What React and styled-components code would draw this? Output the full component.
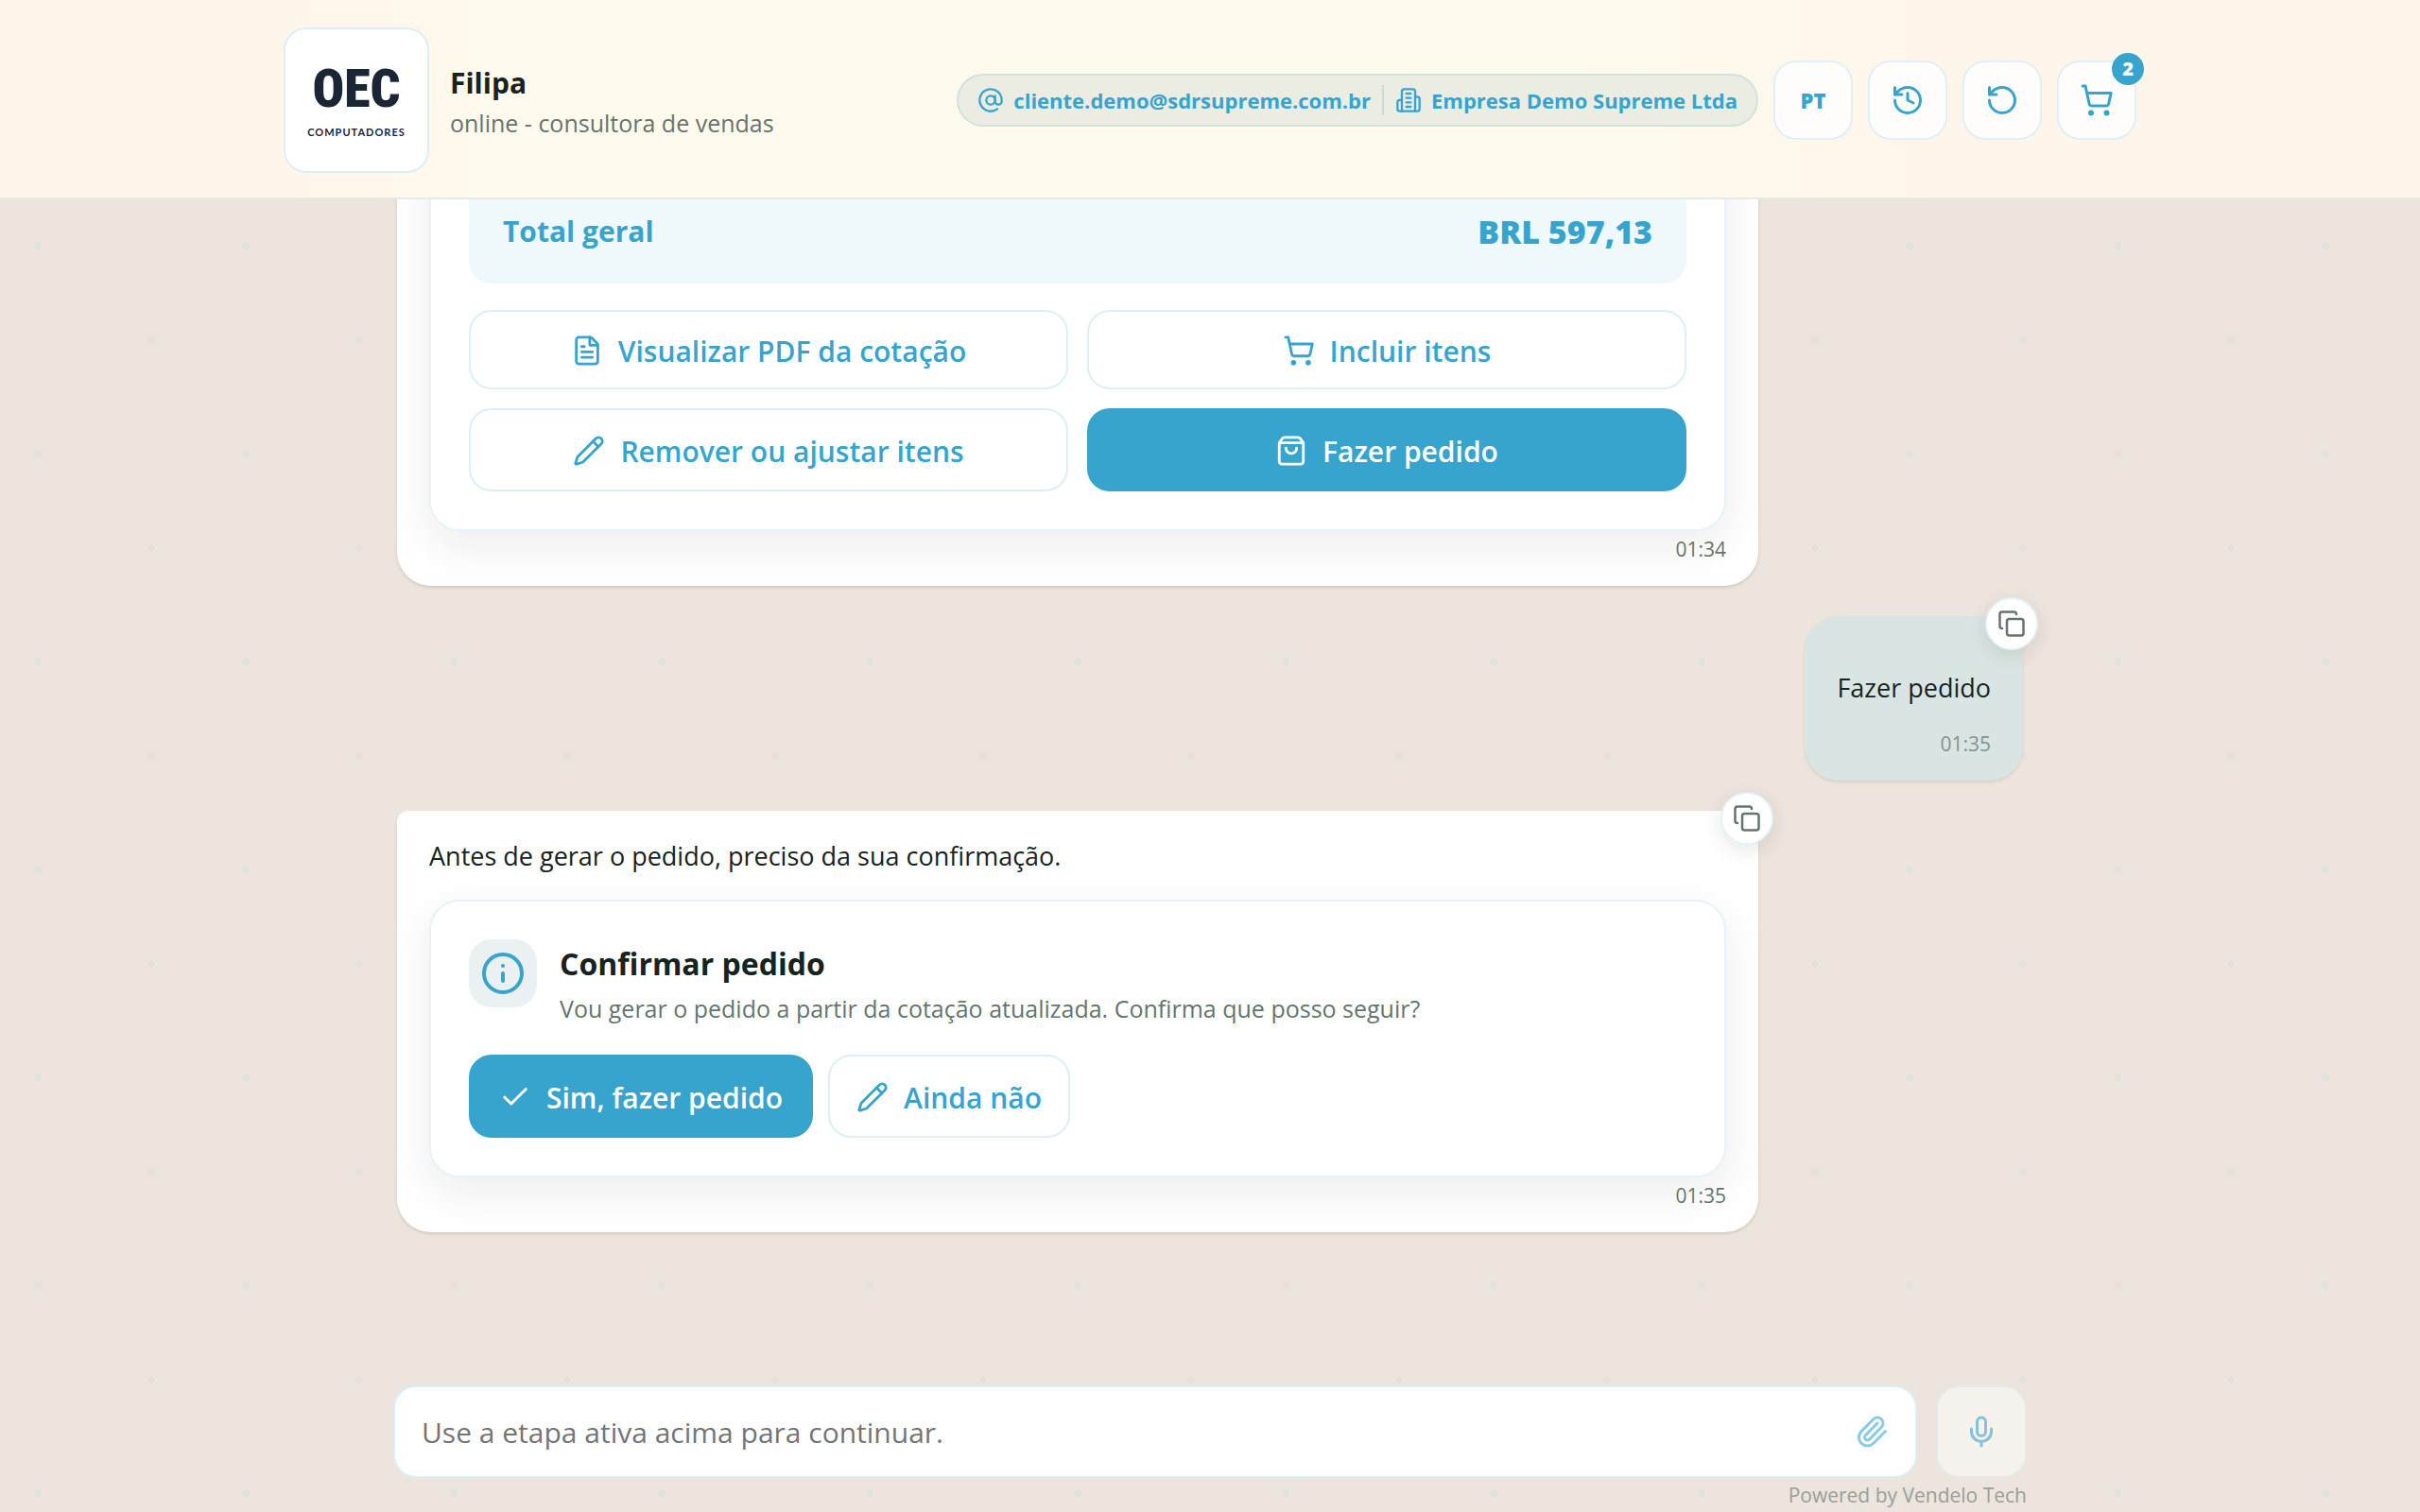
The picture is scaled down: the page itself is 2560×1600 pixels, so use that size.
import React from 'react';
import styled, { createGlobalStyle, css } from 'styled-components';
import {
  AtSign,
  Check,
  Copy,
  FileText,
  History,
  Info,
  Mic,
  Paperclip,
  Pencil,
  RotateCcw,
  ShoppingBag,
  ShoppingCart,
} from 'lucide-react';

const accent = '#37a4ce';
const line = '#dceff7';
const ink = '#17231d';
const muted = '#66756c';

export default class App extends React.Component {
  constructor(props) {
    super(props);
    this.state = { draft: '' };
  }

  handleInputChange(value) {
    this.setState({ draft: value });
  }

  render() {
    return (
      <Page>
        <GlobalStyle />
        <Header>
          <HeaderInner>
            <Logo>
              <LogoName>OEC</LogoName>
              <LogoTag>COMPUTADORES</LogoTag>
            </Logo>
            <Agent>
              <AgentName>Filipa</AgentName>
              <AgentStatus>online - consultora de vendas</AgentStatus>
            </Agent>
            <Customer>
              <AtSign size={28} />
              <span>cliente.demo@sdrsupreme.com.br</span>
              <Divider />
              <BuildingIcon />
              <span>Empresa Demo Supreme Ltda</span>
            </Customer>
            <HeaderButton type="button">PT</HeaderButton>
            <HeaderButton type="button" aria-label="Histórico">
              <History size={36} />
            </HeaderButton>
            <HeaderButton type="button" aria-label="Reiniciar">
              <RotateCcw size={36} />
            </HeaderButton>
            <HeaderButton type="button" aria-label="Carrinho">
              <ShoppingCart size={36} />
              <Badge>2</Badge>
            </HeaderButton>
          </HeaderInner>
        </Header>

        <Chat>
          <Messages>
            <Bubble>
              <Card>
                <Total>
                  <TotalLabel>Total geral</TotalLabel>
                  <TotalValue>BRL 597,13</TotalValue>
                </Total>
                <ActionGrid>
                  <Action type="button">
                    <FileText size={34} />
                    Visualizar PDF da cotação
                  </Action>
                  <Action type="button">
                    <ShoppingCart size={34} />
                    Incluir itens
                  </Action>
                  <Action type="button" $tall>
                    <Pencil size={34} />
                    Remover ou ajustar itens
                  </Action>
                  <Action type="button" $tall $primary>
                    <ShoppingBag size={34} />
                    Fazer pedido
                  </Action>
                </ActionGrid>
              </Card>
              <Time>01:34</Time>
            </Bubble>

            <UserBubble>
              <CopyButton type="button" aria-label="Copiar">
                <Copy size={30} />
              </CopyButton>
              <Text>Fazer pedido</Text>
              <UserTime>01:35</UserTime>
            </UserBubble>

            <Bubble>
              <CopyButton type="button" aria-label="Copiar">
                <Copy size={30} />
              </CopyButton>
              <Text>Antes de gerar o pedido, preciso da sua confirmação.</Text>
              <ConfirmCard>
                <Notice>
                  <NoticeIcon>
                    <Info size={48} />
                  </NoticeIcon>
                  <div>
                    <NoticeTitle>Confirmar pedido</NoticeTitle>
                    <NoticeText>
                      Vou gerar o pedido a partir da cotação atualizada. Confirma que posso seguir?
                    </NoticeText>
                  </div>
                </Notice>
                <ActionRow>
                  <Action type="button" $tall $primary>
                    <Check size={34} />
                    Sim, fazer pedido
                  </Action>
                  <Action type="button" $tall>
                    <Pencil size={34} />
                    Ainda não
                  </Action>
                </ActionRow>
              </ConfirmCard>
              <Time>01:35</Time>
            </Bubble>
          </Messages>
        </Chat>

        <Footer>
          <Composer>
            <Field>
              <FieldInput
                type="text"
                aria-label="Mensagem"
                placeholder="Use a etapa ativa acima para continuar."
                value={this.state.draft}
                onChange={(e) => {
                  this.handleInputChange(e.target.value);
                }}
              />
              <AttachButton type="button" aria-label="Anexar arquivo">
                <Paperclip size={36} />
              </AttachButton>
            </Field>
            <MicButton type="button" aria-label="Gravar áudio">
              <Mic size={36} />
            </MicButton>
          </Composer>
          <Powered>Powered by Vendelo Tech</Powered>
        </Footer>
      </Page>
    );
  }
}

const BuildingIcon = () => (
  <svg
    width="28"
    height="28"
    viewBox="0 0 24 24"
    fill="none"
    stroke="currentColor"
    strokeWidth="2"
    strokeLinecap="round"
    strokeLinejoin="round"
    aria-hidden="true"
  >
    <path d="M6 22V4a2 2 0 0 1 2-2h8a2 2 0 0 1 2 2v18Z" />
    <path d="M6 12H4a2 2 0 0 0-2 2v6a2 2 0 0 0 2 2h2" />
    <path d="M18 9h2a2 2 0 0 1 2 2v9a2 2 0 0 1-2 2h-2" />
    <path d="M10 6h4M10 10h4M10 14h4M10 18h4" />
  </svg>
);

const GlobalStyle = createGlobalStyle`
  * {
    box-sizing: border-box;
  }

  body {
    margin: 0;
    color: ${ink};
    font-family: "Segoe UI", "Open Sans", "Noto Sans", sans-serif;
  }

  button,
  input {
    font: inherit;
    color: inherit;
  }

  button {
    cursor: pointer;
  }

  svg {
    flex: none;
  }
`;

const Page = styled.div`
  display: flex;
  flex-direction: column;
  height: 100vh;
  overflow: hidden;
  background-color: #ece4dd;
  background-image:
    radial-gradient(circle at 40px 40px, #e0e2dc 4px, transparent 4px),
    radial-gradient(circle at 160px 140px, #e4e2db 4px, transparent 4px);
  background-size: 220px 220px;
`;

const Header = styled.header`
  flex: none;
  padding: 28px 40px 25px;
  border-bottom: 2px solid #e4ece8;
  background: linear-gradient(90deg, #fff6eb 12%, #fff9ee 22%, #fff9ee 66%, #fff6eb 80%);
`;

const HeaderInner = styled.div`
  display: flex;
  align-items: center;
  gap: 16px;
  max-width: 1960px;
  min-height: 156px;
  margin: 0 auto;
`;

const Logo = styled.div`
  display: flex;
  flex: none;
  flex-direction: column;
  align-items: center;
  justify-content: center;
  width: 154px;
  height: 154px;
  padding-top: 4px;
  border: 2px solid ${line};
  border-radius: 24px;
  background: #fff;
  color: #1a2536;
`;

const LogoName = styled.span`
  font-family: "Roboto Condensed", "Liberation Sans Narrow", "Liberation Sans", sans-serif;
  font-size: 56px;
  font-weight: 900;
  line-height: 64px;
`;

const LogoTag = styled.span`
  font-family: Lato, sans-serif;
  font-size: 11px;
  font-weight: 700;
  letter-spacing: 1px;
  line-height: 28px;
`;

const Agent = styled.div`
  flex: 1;
  margin-left: 6px;
`;

const AgentName = styled.div`
  font-size: 30px;
  font-weight: 700;
  line-height: 48px;
`;

const AgentStatus = styled.div`
  color: ${muted};
  font-size: 25px;
  line-height: 36px;
`;

const Customer = styled.div`
  display: flex;
  align-items: center;
  gap: 10px;
  height: 56px;
  padding: 0 20px;
  border: 2px solid #cfe3e0;
  border-radius: 28px;
  background: #ebede2;
  color: ${accent};
  font-size: 22px;
  font-weight: 700;
  white-space: nowrap;
`;

const Divider = styled.span`
  width: 2px;
  height: 32px;
  margin: 0 2px;
  background: #c2dcdf;
`;

const HeaderButton = styled.button`
  position: relative;
  display: flex;
  flex: none;
  align-items: center;
  justify-content: center;
  width: 84px;
  height: 84px;
  padding: 0;
  border: 2px solid #e0f0f5;
  border-radius: 24px;
  background: #fffdfb;
  color: ${accent};
  font-size: 22px;
  font-weight: 800;
`;

const Badge = styled.span`
  position: absolute;
  top: -10px;
  right: -10px;
  width: 34px;
  height: 34px;
  border-radius: 50%;
  background: ${accent};
  color: #fff;
  font-size: 20px;
  line-height: 34px;
  text-align: center;
`;

const Chat = styled.main`
  display: flex;
  flex: 1;
  flex-direction: column;
  justify-content: flex-end;
  min-height: 0;
  overflow: hidden;
  padding: 0 40px 162px;
`;

const Messages = styled.div`
  display: flex;
  flex-direction: column;
  align-items: flex-start;
  gap: 32px;
  width: 100%;
  max-width: 1720px;
  margin: 0 auto;
`;

const Bubble = styled.article`
  position: relative;
  width: 100%;
  max-width: 1440px;
  padding: 24px 34px 20px;
  border-radius: 12px 36px 36px 36px;
  background: #fff;
  box-shadow: 0 2px 3px rgba(120, 105, 70, 0.2);
`;

const UserBubble = styled.article`
  position: relative;
  align-self: flex-end;
  padding: 52px 34px 20px;
  border-radius: 36px;
  background: #d8e5e3;
  box-shadow: 0 2px 3px rgba(120, 105, 70, 0.16);
`;

const CopyButton = styled.button`
  position: absolute;
  top: -20px;
  right: -16px;
  display: flex;
  align-items: center;
  justify-content: center;
  width: 56px;
  height: 56px;
  padding: 0;
  border: 2px solid #e4f2f9;
  border-radius: 50%;
  background: #fff;
  color: ${muted};
  box-shadow: 0 6px 20px rgba(70, 60, 30, 0.12);
`;

const Text = styled.p`
  margin: 0;
  font-size: 27px;
  line-height: 48px;
`;

const Time = styled.div`
  color: ${muted};
  font-size: 21px;
  line-height: 38px;
  text-align: right;
`;

const UserTime = styled(Time)`
  margin-top: 16px;
  color: #87928f;
`;

const Card = styled.section`
  padding: 40px;
  border: 2px solid #e6f3f9;
  border-radius: 32px;
  background: #fff;
  box-shadow: 0 16px 48px rgba(20, 20, 20, 0.08);
`;

const ConfirmCard = styled(Card)`
  margin-top: 22px;
`;

const Total = styled.div`
  display: flex;
  align-items: center;
  justify-content: space-between;
  padding: 32px 36px;
  border-radius: 24px;
  background: #eff8fb;
  color: ${accent};
  line-height: 46px;
`;

const TotalLabel = styled.span`
  font-size: 30px;
  font-weight: 700;
`;

const TotalValue = styled.span`
  font-size: 34px;
  font-weight: 800;
`;

const ActionGrid = styled.div`
  display: grid;
  grid-template-columns: 1fr 1fr;
  gap: 20px;
  margin-top: 28px;
`;

const ActionRow = styled.div`
  display: flex;
  gap: 16px;
  margin-top: 28px;
`;

const Action = styled.button`
  display: flex;
  align-items: center;
  justify-content: center;
  gap: 16px;
  height: ${(props) => (props.$tall ? '88px' : '84px')};
  padding: 2px 28px 0;
  border: 2px solid ${line};
  border-radius: 24px;
  background: #fff;
  color: ${accent};
  font-size: 30px;
  font-weight: 600;

  ${(props) =>
    props.$primary &&
    css`
      padding: 2px 32px 0;
      border: 0;
      background: ${accent};
      color: #fff;
    `}
`;

const Notice = styled.div`
  display: flex;
  gap: 24px;
`;

const NoticeIcon = styled.span`
  display: flex;
  flex: none;
  align-items: center;
  justify-content: center;
  width: 72px;
  height: 72px;
  border-radius: 24px;
  background: #ebf1f2;
  color: ${accent};
`;

const NoticeTitle = styled.h2`
  margin: 0;
  font-size: 32px;
  font-weight: 700;
  line-height: 52px;
`;

const NoticeText = styled.p`
  margin: 0;
  color: ${muted};
  font-size: 25px;
  line-height: 42px;
`;

const Footer = styled.footer`
  flex: none;
  width: 100%;
  max-width: 1808px;
  margin: 0 auto;
  padding: 0 40px;
`;

const Composer = styled.div`
  display: flex;
  gap: 20px;
`;

const Field = styled.div`
  display: flex;
  flex: 1;
  align-items: center;
  height: 98px;
  padding: 0 28px;
  border: 2px solid #daeff6;
  border-radius: 24px;
  background: #fff;
`;

const FieldInput = styled.input`
  flex: 1;
  min-width: 0;
  height: 100%;
  padding: 0;
  border: 0;
  outline: 0;
  background: transparent;
  font-size: 30px;

  &::placeholder {
    color: #757575;
    opacity: 1;
  }
`;

const AttachButton = styled.button`
  display: flex;
  padding: 0;
  border: 0;
  background: transparent;
  color: #8acae3;
`;

const MicButton = styled.button`
  display: flex;
  flex: none;
  align-items: center;
  justify-content: center;
  width: 96px;
  padding: 0;
  border: 2px solid #e2eaea;
  border-radius: 24px;
  background: #f5f1ec;
  color: #85c3da;
`;

const Powered = styled.div`
  color: #98a097;
  font-size: 21px;
  line-height: 36px;
  text-align: right;
`;
